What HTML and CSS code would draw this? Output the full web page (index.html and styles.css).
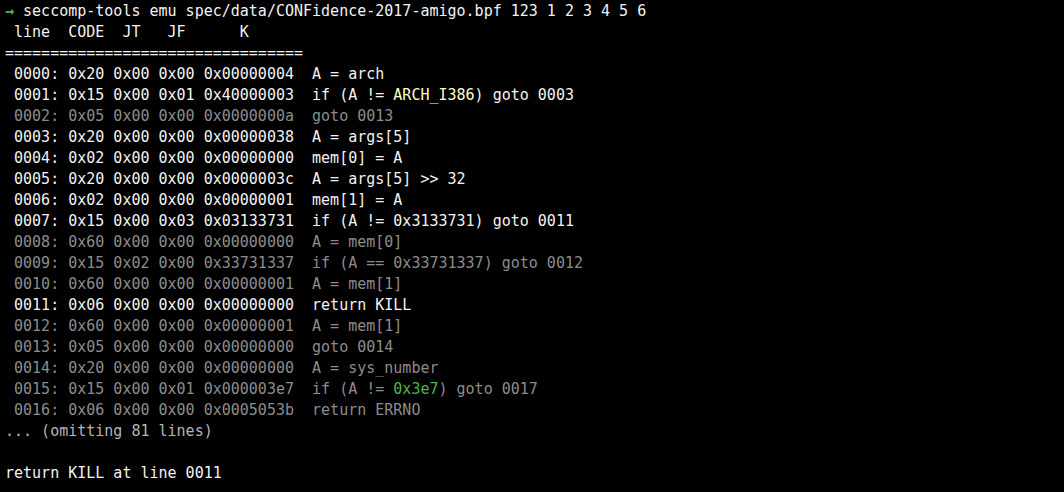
FILE: index.html
```html
<!DOCTYPE html>
<html>
<head>
<meta charset="utf-8">
<link rel="stylesheet" href="styles.css">
</head>
<body>
<div class="term">
<div class="ln"><span class="green arrow">→</span> seccomp-tools emu spec/data/CONFidence-2017-amigo.bpf 123 1 2 3 4 5 6</div>
<div class="ln"> line  CODE  JT   JF      K</div>
<div class="ln">=================================</div>
<div class="ln"> 0000: 0x20 0x00 0x00 0x00000004  A = arch</div>
<div class="ln"> 0001: 0x15 0x00 0x01 0x40000003  if (A != <span class="yellow">ARCH_I386</span>) goto 0003</div>
<div class="ln dim"> 0002: 0x05 0x00 0x00 0x0000000a  goto 0013</div>
<div class="ln"> 0003: 0x20 0x00 0x00 0x00000038  A = args[5]</div>
<div class="ln"> 0004: 0x02 0x00 0x00 0x00000000  mem[0] = A</div>
<div class="ln"> 0005: 0x20 0x00 0x00 0x0000003c  A = args[5] &gt;&gt; 32</div>
<div class="ln"> 0006: 0x02 0x00 0x00 0x00000001  mem[1] = A</div>
<div class="ln"> 0007: 0x15 0x00 0x03 0x03133731  if (A != 0x3133731) goto 0011</div>
<div class="ln dim"> 0008: 0x60 0x00 0x00 0x00000000  A = mem[0]</div>
<div class="ln dim"> 0009: 0x15 0x02 0x00 0x33731337  if (A == 0x33731337) goto 0012</div>
<div class="ln dim"> 0010: 0x60 0x00 0x00 0x00000001  A = mem[1]</div>
<div class="ln"> 0011: 0x06 0x00 0x00 0x00000000  return KILL</div>
<div class="ln dim"> 0012: 0x60 0x00 0x00 0x00000001  A = mem[1]</div>
<div class="ln dim"> 0013: 0x05 0x00 0x00 0x00000000  goto 0014</div>
<div class="ln dim"> 0014: 0x20 0x00 0x00 0x00000000  A = sys_number</div>
<div class="ln dim"> 0015: 0x15 0x00 0x01 0x000003e7  if (A != <span class="green">0x3e7</span>) goto 0017</div>
<div class="ln dim"> 0016: 0x06 0x00 0x00 0x0005053b  return ERRNO</div>
<div class="ln mid">... (omitting 81 lines)</div>
<div class="ln"> </div>
<div class="ln">return KILL at line 0011</div>
</div>
</body>
</html>
```
FILE: styles.css
```css
html, body {
  margin: 0;
  padding: 0;
  background: #000;
}
.term {
  width: 1064px;
  height: 492px;
  box-sizing: border-box;
  padding: 1px 0 0 5px;
  background: #000;
  color: #f2f2f2;
  font-family: "DejaVu Sans Mono", "Liberation Mono", monospace;
  font-size: 15px;
  line-height: 21px;
  overflow: hidden;
}
.ln {
  white-space: pre;
  height: 21px;
}
.dim {
  color: #8c8c8c;
}
.mid {
  color: #b4b4b4;
}
.green {
  color: #4fb34f;
}
.arrow {
  font-weight: bold;
}
.yellow {
  color: #ffffc6;
}
```
